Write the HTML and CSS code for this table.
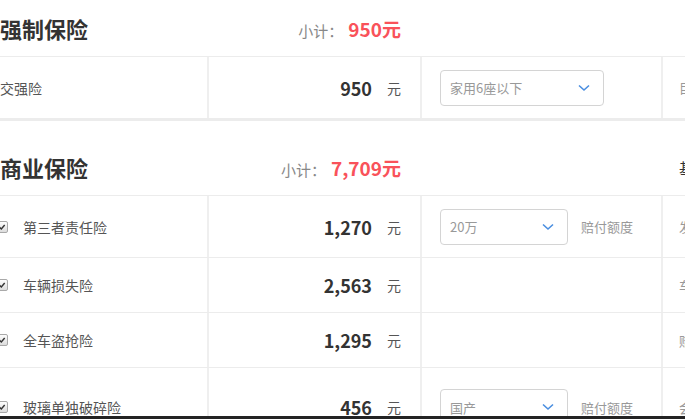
FILE: index.html
```html
<!DOCTYPE html>
<html lang="zh-CN">
<head>
    <meta charset="UTF-8">
    <meta name="viewport" content="width=device-width, initial-scale=1.0">
    <title>保险费用明细</title>
    <link rel="stylesheet" href="styles.css">
</head>
<body>
    <div class="page">
        <section class="group first">
            <div class="group-head">
                <h2 class="group-title">强制保险</h2>
                <div class="subtotal">小计：<em>950元</em></div>
                <div class="head-blank"></div>
                <div class="head-note"></div>
            </div>
            <div class="row tall last">
                <div class="cell name">交强险</div>
                <div class="cell price"><b>950</b><span class="unit">元</span></div>
                <div class="cell option">
                    <div class="select wide">家用6座以下
                        <svg class="chevron" width="12" height="8" viewBox="0 0 12 8"><path d="M1 1.5 L6 6 L11 1.5" fill="none" stroke="#4a8ee0" stroke-width="1.6"/></svg>
                    </div>
                </div>
                <div class="cell note">目前国家规定必须购买</div>
            </div>
        </section>

        <section class="group second">
            <div class="group-head">
                <h2 class="group-title">商业保险</h2>
                <div class="subtotal">小计：<em>7,709元</em></div>
                <div class="head-blank"></div>
                <div class="head-note">基本说明</div>
            </div>
            <div class="row tall">
                <div class="cell name"><span class="check"><svg width="12" height="12" viewBox="0 0 12 12"><path d="M3 6.2 L5.2 8.4 L9.2 3.6" fill="none" stroke="#333" stroke-width="1.7"/></svg></span>第三者责任险</div>
                <div class="cell price"><b>1,270</b><span class="unit">元</span></div>
                <div class="cell option">
                    <div class="select">20万
                        <svg class="chevron" width="12" height="8" viewBox="0 0 12 8"><path d="M1 1.5 L6 6 L11 1.5" fill="none" stroke="#4a8ee0" stroke-width="1.6"/></svg>
                    </div>
                    <span class="option-label">赔付额度</span>
                </div>
                <div class="cell note">发生意外撞车时赔付</div>
            </div>
            <div class="row">
                <div class="cell name"><span class="check"><svg width="12" height="12" viewBox="0 0 12 12"><path d="M3 6.2 L5.2 8.4 L9.2 3.6" fill="none" stroke="#333" stroke-width="1.7"/></svg></span>车辆损失险</div>
                <div class="cell price"><b>2,563</b><span class="unit">元</span></div>
                <div class="cell option"></div>
                <div class="cell note">车辆受损时赔付</div>
            </div>
            <div class="row">
                <div class="cell name"><span class="check"><svg width="12" height="12" viewBox="0 0 12 12"><path d="M3 6.2 L5.2 8.4 L9.2 3.6" fill="none" stroke="#333" stroke-width="1.7"/></svg></span>全车盗抢险</div>
                <div class="cell price"><b>1,295</b><span class="unit">元</span></div>
                <div class="cell option"></div>
                <div class="cell note">赔付车辆被盗损失</div>
            </div>
            <div class="row taller">
                <div class="cell name"><span class="check"><svg width="12" height="12" viewBox="0 0 12 12"><path d="M3 6.2 L5.2 8.4 L9.2 3.6" fill="none" stroke="#333" stroke-width="1.7"/></svg></span>玻璃单独破碎险</div>
                <div class="cell price"><b>456</b><span class="unit">元</span></div>
                <div class="cell option">
                    <div class="select">国产
                        <svg class="chevron" width="12" height="8" viewBox="0 0 12 8"><path d="M1 1.5 L6 6 L11 1.5" fill="none" stroke="#4a8ee0" stroke-width="1.6"/></svg>
                    </div>
                    <span class="option-label">赔付额度</span>
                </div>
                <div class="cell note">会赔付玻璃破碎</div>
            </div>
        </section>
    </div>
    <div class="bottom-bar"></div>
</body>
</html>
```

FILE: styles.css
```css
html, body {
    margin: 0;
    height: 100%;
    overflow: hidden;
    background-color: white;
}
body {
    font-family: "Noto Sans CJK SC", "Liberation Sans", sans-serif;
    color: #333;
}
.page {
    width: 685px;
    overflow: hidden;
    white-space: nowrap;
}
.group-head, .row {
    display: grid;
    grid-template-columns: 209px 213px 241px 200px;
}
.group-head {
    height: 56px;
    align-items: center;
    border-bottom: 1px solid #ececec;
}
.group.second .group-head {
    padding-top: 18px;
}
.group-title {
    margin: 0;
    font-size: 22px;
    font-weight: bold;
    color: #333;
}
.subtotal {
    justify-self: end;
    padding-right: 21px;
    font-size: 15px;
    color: #888;
}
.subtotal em {
    font-style: normal;
    font-weight: bold;
    font-size: 19px;
    color: #f9525a;
    margin-left: 5px;
}
.head-note {
    padding-left: 16px;
    font-size: 15px;
    color: #333;
}
.row {
    height: 54px;
    border-bottom: 1px solid #ececec;
}
.row.tall {
    height: 61px;
}
.row.taller {
    height: 78px;
}
.row.last {
    border-bottom: 3px solid #ececec;
}
.cell {
    display: flex;
    align-items: center;
}
.name {
    font-size: 14px;
    color: #555;
    border-right: 2px solid #efefef;
}
.check {
    display: inline-flex;
    width: 12px;
    height: 12px;
    margin-left: -4px;
    margin-right: 15px;
    border: 1px solid #a9a9a9;
    border-radius: 2px;
    background: linear-gradient(#fdfdfd, #dcdcdc);
    box-sizing: border-box;
    align-items: center;
    justify-content: center;
}
.check svg {
    width: 10px;
    height: 10px;
}
.price {
    justify-content: flex-end;
    padding-right: 19px;
    border-right: 2px solid #efefef;
}
.price b {
    font-size: 18px;
    color: #333;
}
.unit {
    margin-left: 15px;
    font-size: 14px;
    color: #555;
}
.option {
    padding-left: 18px;
    border-right: 2px solid #efefef;
}
.select {
    display: flex;
    align-items: center;
    justify-content: space-between;
    box-sizing: border-box;
    width: 128px;
    height: 36px;
    padding: 0 13px 0 9px;
    border: 1px solid #d4d4d4;
    border-radius: 4px;
    font-size: 13px;
    color: #999;
}
.select.wide {
    width: 164px;
}
.option-label {
    margin-left: 13px;
    font-size: 13px;
    color: #999;
}
.note {
    padding-left: 16px;
    font-size: 13px;
    color: #999;
}
.bottom-bar {
    position: fixed;
    left: 0;
    right: 0;
    bottom: 0;
    height: 3px;
    background-color: #232323;
}
```
